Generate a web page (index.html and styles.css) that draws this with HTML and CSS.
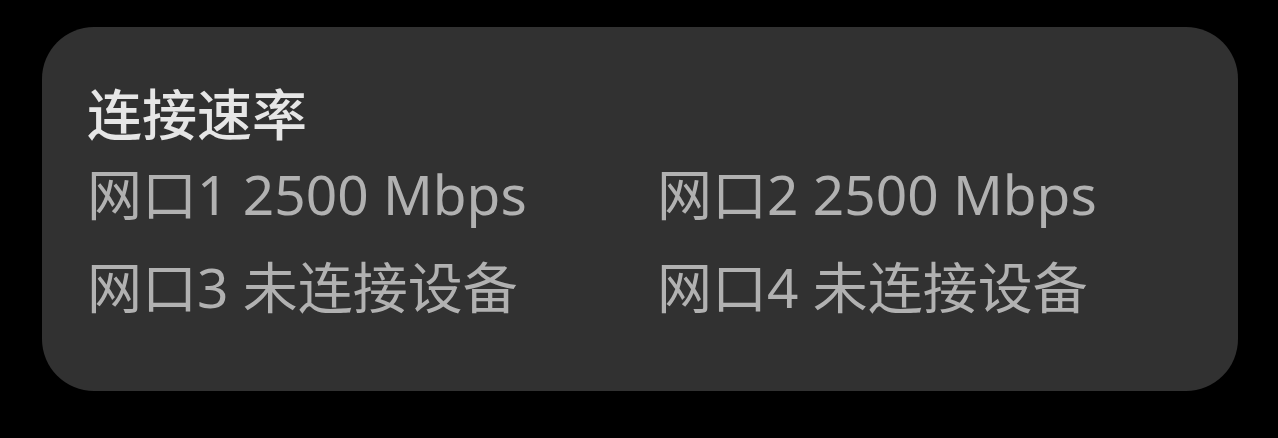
FILE: index.html
```html
<!DOCTYPE html>
<html lang="zh-CN">
<head>
<meta charset="utf-8">
<link rel="stylesheet" href="styles.css">
</head>
<body>
<div class="page">
  <section class="card">
    <h2 class="title">连接速率</h2>
    <div class="ports">
      <div class="port">网口1 2500 Mbps</div>
      <div class="port">网口2 2500 Mbps</div>
      <div class="port">网口3 未连接设备</div>
      <div class="port">网口4 未连接设备</div>
    </div>
  </section>
</div>
</body>
</html>
```

FILE: styles.css
```css
html, body {
  margin: 0;
  padding: 0;
  background: #000;
}
.page {
  width: 1278px;
  height: 438px;
  padding: 27px 0 0 42px;
  box-sizing: border-box;
  font-family: "Noto Sans", "Noto Sans CJK SC", sans-serif;
}
.card {
  width: 1196px;
  height: 364px;
  box-sizing: border-box;
  background: #313131;
  border-radius: 52px;
  padding: 57px 0 0 45px;
}
.title {
  margin: 0;
  font-size: 55px;
  line-height: 60px;
  font-weight: 500;
  color: #e6e6e6;
}
.ports {
  display: grid;
  grid-template-columns: 570px 1fr;
  row-gap: 33px;
  margin-top: 20px;
}
.port {
  font-size: 55px;
  line-height: 60px;
  color: #b1b1b1;
  white-space: nowrap;
}
```
